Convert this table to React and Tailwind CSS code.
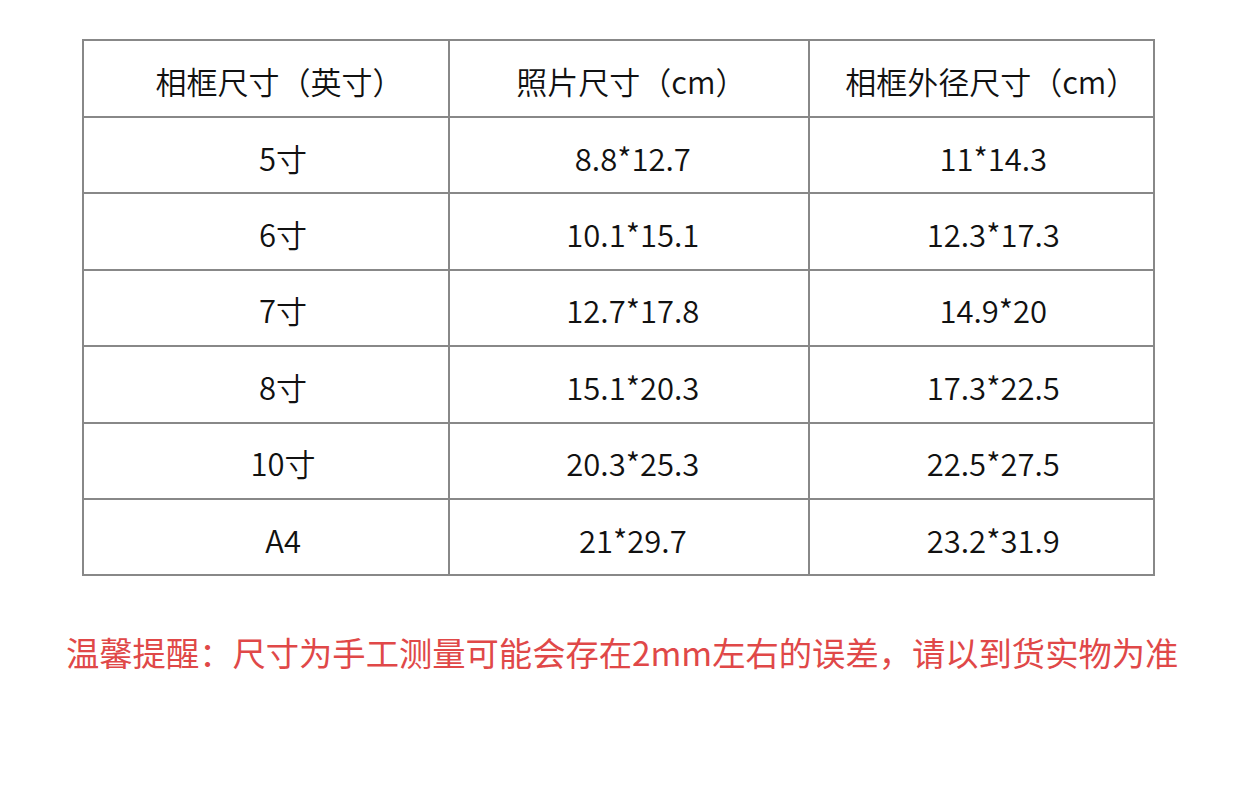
export default function App() {
  const rows = [
    ["5寸", "8.8*12.7", "11*14.3"],
    ["6寸", "10.1*15.1", "12.3*17.3"],
    ["7寸", "12.7*17.8", "14.9*20"],
    ["8寸", "15.1*20.3", "17.3*22.5"],
    ["10寸", "20.3*25.3", "22.5*27.5"],
    ["A4", "21*29.7", "23.2*31.9"],
  ];
  const font = { fontFamily: '"Noto Sans CJK SC", "Noto Sans", sans-serif' };
  return (
    <div className="w-[1242px] h-[788px] bg-white overflow-hidden" style={font}>
      <div className="pt-[39px] pl-[82px]">
        <table className="border-collapse text-[31px] font-[350] text-[#111] w-[1073px]">
          <colgroup>
            <col className="w-[367px]" />
            <col className="w-[360px]" />
            <col className="w-[346px]" />
          </colgroup>
          <tbody>
            <tr className="h-[77px]">
              <td className="border-2 border-[#888] text-center pl-[27px] pt-[4px] leading-none">相框尺寸（英寸）</td>
              <td className="border-2 border-[#888] text-center pl-[5px] pt-[4px] leading-none">照片尺寸（cm）</td>
              <td className="border-2 border-[#888] text-center pl-[20px] pt-[4px] leading-none">相框外径尺寸（cm）</td>
            </tr>
            {rows.map((r, i) => (
              <tr key={i} className="h-[76.4px]">
                <td className="border-2 border-[#888] text-center pl-[34px] pt-[4px] leading-none">{r[0]}</td>
                <td className="border-2 border-[#888] text-center pl-[8px] pt-[4px] leading-none">{r[1]}</td>
                <td className="border-2 border-[#888] text-center pl-[24px] pt-[4px] leading-none">{r[2]}</td>
              </tr>
            ))}
          </tbody>
        </table>
      </div>
      <div className="pl-[66px] mt-[59px] text-[33.3px] leading-none text-[#e04848] whitespace-nowrap">
        温馨提醒：尺寸为手工测量可能会存在2mm左右的误差，请以到货实物为准
      </div>
    </div>
  );
}
